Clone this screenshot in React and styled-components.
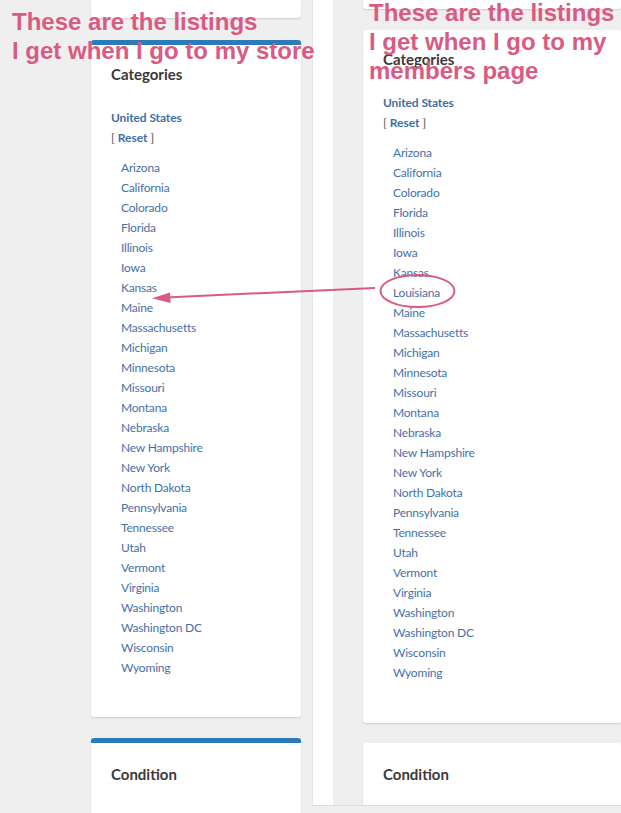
import React from "react";
import styled, { createGlobalStyle } from "styled-components";

const Global = createGlobalStyle`
  html, body { margin: 0; padding: 0; background: #efefef; }
  * { box-sizing: border-box; }
`;

const Page = styled.div`
  position: relative;
  display: flex;
  width: 621px;
  height: 813px;
  overflow: hidden;
  background: #efefef;
  font-family: Lato, "Noto Sans", sans-serif;
`;

const LeftShot = styled.div`
  width: 312px;
  flex-shrink: 0;
  padding-left: 91px;
  padding-right: 11px;
  display: flex;
  flex-direction: column;
`;

const RightShot = styled.div`
  width: 309px;
  height: 806px;
  flex-shrink: 0;
  display: flex;
  border-bottom: 1px solid #dcdcdc;
  overflow: hidden;
`;

const Strip = styled.div`
  width: 21px;
  flex-shrink: 0;
  background: #ffffff;
  border-left: 1px solid #e6e6e6;
`;

const RightColumn = styled.div`
  flex: 1;
  padding-left: 30px;
  display: flex;
  flex-direction: column;
  background: #efefef;
  min-width: 0;
`;

const Card = styled.div`
  flex-shrink: 0;
  background: #ffffff;
  border-radius: 3px;
  box-shadow: 0 1px 2px rgba(0, 0, 0, 0.14);
  border-top: ${(p) => (p.$accent ? "5px solid #2b7bb9" : "none")};
  margin-top: ${(p) => p.$mt || 0}px;
  padding: ${(p) => p.$pt || 0}px 20px ${(p) => p.$pb || 0}px 20px;
  height: ${(p) => (p.$h ? `${p.$h}px` : "auto")};
  border-top-left-radius: ${(p) => (p.$flushTop ? 0 : 3)}px;
  border-top-right-radius: ${(p) => (p.$flushTop ? 0 : 3)}px;
`;

const Title = styled.h3`
  margin: 0;
  font-size: 15px;
  line-height: 20px;
  font-weight: 700;
  color: #3a3a3a;
`;

const Country = styled.a`
  display: block;
  margin-top: 24px;
  font-size: 12px;
  line-height: 20px;
  font-weight: 700;
  letter-spacing: -0.1px;
  color: #3e6fa6;
  text-decoration: none;
`;

const ResetRow = styled.div`
  font-size: 12px;
  line-height: 20px;
  color: #555;
`;

const ResetLink = styled.a`
  font-weight: 700;
  color: #3e6fa6;
  text-decoration: none;
  margin: 0 3px;
`;

const StateList = styled.ul`
  list-style: none;
  margin: 10px 0 0 0;
  padding: 0 0 0 10px;
`;

const StateItem = styled.li`
  font-size: 12px;
  line-height: 20px;
  letter-spacing: -0.2px;
  color: #4670a8;
`;

const Note = styled.div`
  position: absolute;
  left: ${(p) => p.$x}px;
  top: ${(p) => p.$y}px;
  font-family: "Liberation Sans", Arial, sans-serif;
  font-weight: 700;
  font-size: 24px;
  line-height: ${(p) => p.$lh}px;
  color: #d95a82;
  white-space: nowrap;
  pointer-events: none;
`;

const Overlay = styled.svg`
  position: absolute;
  left: 0;
  top: 0;
  pointer-events: none;
`;

const storeStates = [
  "Arizona", "California", "Colorado", "Florida", "Illinois", "Iowa", "Kansas",
  "Maine", "Massachusetts", "Michigan", "Minnesota", "Missouri", "Montana",
  "Nebraska", "New Hampshire", "New York", "North Dakota", "Pennsylvania",
  "Tennessee", "Utah", "Vermont", "Virginia", "Washington", "Washington DC",
  "Wisconsin", "Wyoming",
];

const memberStates = [...storeStates.slice(0, 7), "Louisiana", ...storeStates.slice(7)];

function CategoriesCard({ states, accent, mt, pb }) {
  return (
    <Card $accent={accent} $mt={mt} $pt={19} $pb={pb}>
      <Title>Categories</Title>
      <Country href="#">United States</Country>
      <ResetRow>
        [<ResetLink href="#">Reset</ResetLink>]
      </ResetRow>
      <StateList>
        {states.map((s) => (
          <StateItem key={s}>{s}</StateItem>
        ))}
      </StateList>
    </Card>
  );
}

function ConditionCard({ accent, mt }) {
  return (
    <Card $accent={accent} $mt={mt} $pt={21} $pb={40}>
      <Title>Condition</Title>
    </Card>
  );
}

export default function App() {
  return (
    <>
      <Global />
      <Page>
        <LeftShot>
          <Card $h={18} $flushTop />
          <CategoriesCard states={storeStates} accent mt={22} pb={39} />
          <ConditionCard accent mt={21} />
        </LeftShot>
        <RightShot>
          <Strip />
          <RightColumn>
            <Card $h={9} $flushTop />
            <CategoriesCard states={memberStates} mt={21} pb={40} />
            <ConditionCard mt={20} />
          </RightColumn>
        </RightShot>

        <Note $x={12} $y={7} $lh={29}>
          These are the listings
          <br />
          I get when I go to my store
        </Note>
        <Note $x={369} $y={-2} $lh={29}>
          These are the listings
          <br />
          I get when I go to my
          <br />
          members page
        </Note>

        <Overlay width="621" height="813" viewBox="0 0 621 813">
          <line x1="375" y1="288" x2="166" y2="297.4" stroke="#d95a82" strokeWidth="2" />
          <polygon points="152,298.2 170,292.4 170.6,303" fill="#d95a82" />
          <ellipse cx="417.5" cy="291" rx="37" ry="16" fill="none" stroke="#d95a82" strokeWidth="2" />
        </Overlay>
      </Page>
    </>
  );
}
